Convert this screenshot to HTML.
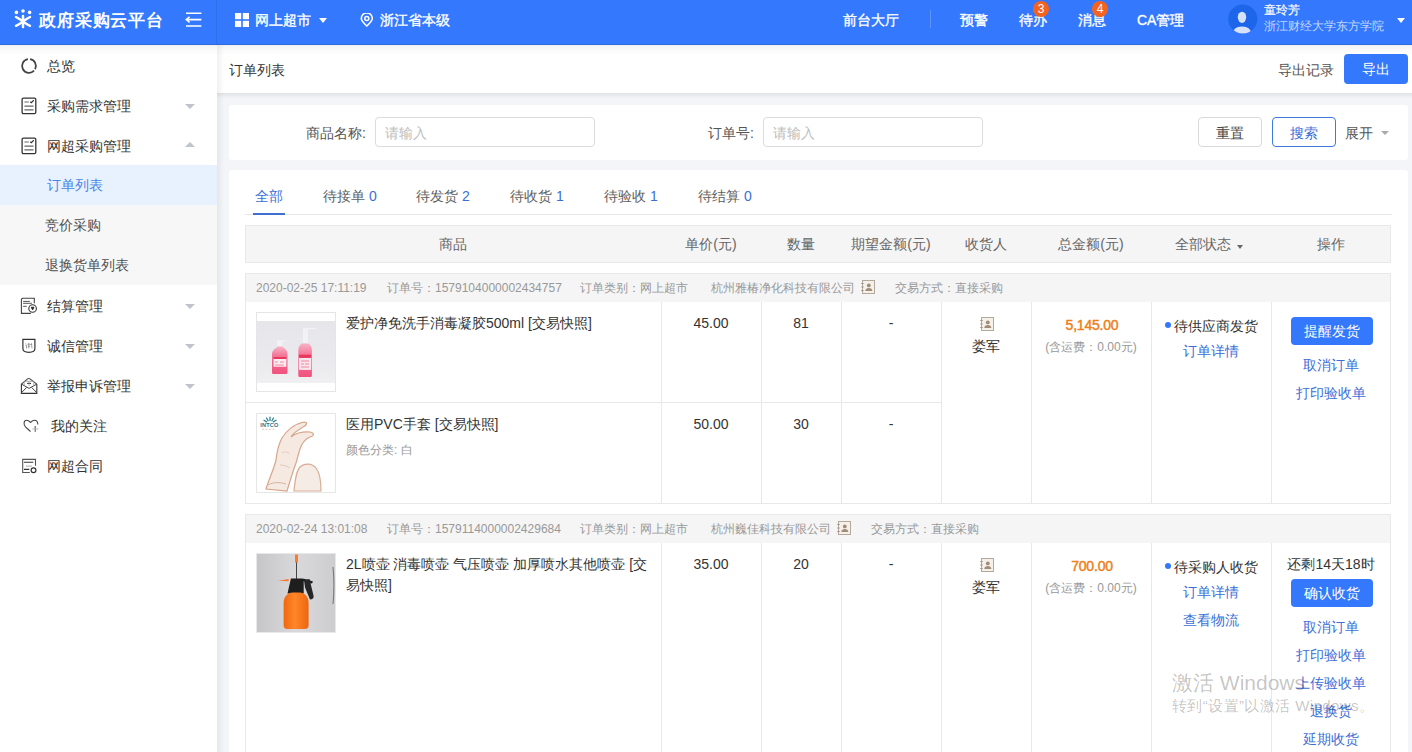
<!DOCTYPE html>
<html><head><meta charset="utf-8">
<style>
*{box-sizing:border-box;margin:0;padding:0}
html,body{width:1412px;height:752px;overflow:hidden;background:#f4f5f8;font-family:"Liberation Sans",sans-serif;font-size:14px;color:#333}
.a{position:absolute;white-space:nowrap}
#hd{position:absolute;left:0;top:0;width:1412px;height:45px;background:#3478fd;color:#fff}
#hd .t{position:absolute;top:0;line-height:40px;font-size:14px;color:#fff;-webkit-text-stroke:0.35px #fff}
#sb{position:absolute;left:0;top:45px;width:217px;height:707px;background:#fff}
#sbsh{position:absolute;left:217px;top:45px;width:7px;height:707px;background:linear-gradient(to right,rgba(0,0,0,.06),rgba(0,0,0,0))}
#hdsh{position:absolute;left:0;top:45px;width:1412px;height:11px;background:linear-gradient(to bottom,rgba(0,0,0,.055),rgba(0,0,0,.02) 45%,rgba(0,0,0,0))}
#hdln{position:absolute;left:0;top:44px;width:1412px;height:1px;background:rgba(0,0,0,.12)}
.mi{position:absolute;left:0;width:217px;height:40px;line-height:40px;font-size:14px;color:#333}
.mi .tx{position:absolute;left:47px;top:0}
.mi .car{position:absolute;left:185px;top:18px;width:0;height:0;border-left:5px solid transparent;border-right:5px solid transparent;border-top:5px solid #c0c4cc}
.mi .car.up{border-top:0;border-bottom:5px solid #c0c4cc;top:16px}
.sub{background:#f7f7f7;color:#505050}
.sub .tx{left:45px}
.sub.on{background:#e8f1fe;color:#4a85e6}
.sub.on .tx{left:47px}
#tb{position:absolute;left:217px;top:45px;width:1195px;height:48px;background:#fff}
#tbsh{position:absolute;left:217px;top:93px;width:1195px;height:6px;background:linear-gradient(to bottom,rgba(0,0,0,.08),rgba(0,0,0,.02) 60%,rgba(0,0,0,0))}
.btn{position:absolute;height:30px;line-height:30px;text-align:center;border:1px solid #d9d9d9;border-radius:4px;background:#fff;font-size:14px;color:#444}
.card{position:absolute;background:#fff;border-radius:3px}
.inp{position:absolute;height:30px;border:1px solid #dcdcdc;border-radius:4px;background:#fff;color:#bdbdbd;font-size:14px;line-height:30px;padding-left:9px}
.lbl{position:absolute;font-size:14px;color:#555;line-height:30px;text-align:right}
.c{position:absolute;width:200px;text-align:center;line-height:20px;white-space:nowrap}
.lk{color:#3b6fd8}
</style></head><body>
<div id="hd">
<svg class="a" style="left:12px;top:8px" width="22" height="22" viewBox="0 0 22 22"><g fill="#fff"><circle cx="4.4" cy="4.4" r="1.8"/><circle cx="11" cy="3" r="1.8"/><circle cx="17.6" cy="4.4" r="1.8"/></g><g stroke="#fff" stroke-width="2.5" stroke-linecap="round" fill="none"><path d="M11 8v11"/><path d="M4 9c3 1.5 5 3 7 4.3 2-1.3 4-2.8 7-4.3"/><path d="M4 17.8c3-1.5 5-3 7-4.3 2 1.3 4 2.8 7 4.3"/></g></svg>
<div class="a" style="left:39px;top:9px;font-size:16.5px;font-weight:bold;line-height:22px;letter-spacing:0.85px">政府采购云平台</div>
<svg class="a" style="left:184px;top:11px" width="19" height="17" viewBox="0 0 19 17"><g stroke="#fff" stroke-width="1.6" fill="none"><path d="M2 2.2h15.4M3 8.6h14.4M2 15h15.4"/><path d="M5.6 5.8L2.3 8.6l3.3 2.8"/></g></svg>
<div class="a" style="left:216px;top:0;width:1px;height:45px;background:rgba(0,0,0,.07)"></div>
<svg class="a" style="left:235px;top:13px" width="14" height="14" viewBox="0 0 14 14"><g fill="#fff"><rect x="0" y="0" width="6.2" height="6.2"/><rect x="7.8" y="0" width="6.2" height="6.2"/><rect x="0" y="7.8" width="6.2" height="6.2"/><rect x="7.8" y="7.8" width="6.2" height="6.2"/></g></svg>
<div class="t" style="left:255px">网上超市</div>
<div class="a" style="left:319px;top:18px;border-left:4.5px solid transparent;border-right:4.5px solid transparent;border-top:5px solid #fff"></div>
<svg class="a" style="left:360px;top:13px" width="14" height="14" viewBox="0 0 14 14"><path d="M6.8 13C3.5 9.8 1.3 7.4 1.3 5.4a5.5 5.5 0 0 1 11 0c0 2-2.2 4.4-5.5 7.6z" stroke="#fff" stroke-width="1.6" fill="none"/><circle cx="6.8" cy="5.5" r="2" stroke="#fff" stroke-width="1.5" fill="none"/></svg>
<div class="t" style="left:380px">浙江省本级</div>
<div class="t" style="left:843px">前台大厅</div>
<div class="a" style="left:930px;top:10px;width:1px;height:18px;background:rgba(255,255,255,.2)"></div>
<div class="t" style="left:960px">预警</div>
<div class="t" style="left:1019px">待办</div>
<div class="a" style="left:1033px;top:1px;width:16px;height:16px;border-radius:8px;background:#f4631e;color:#fff;font-size:12px;line-height:16px;text-align:center">3</div>
<div class="t" style="left:1078px">消息</div>
<div class="a" style="left:1092px;top:1px;width:16px;height:16px;border-radius:8px;background:#f4631e;color:#fff;font-size:12px;line-height:16px;text-align:center">4</div>
<div class="t" style="left:1137px">CA管理</div>
<svg class="a" style="left:1228px;top:4px" width="30" height="30" viewBox="0 0 30 30"><defs><clipPath id="cp"><circle cx="14.8" cy="15" r="14.6"/></clipPath></defs><circle cx="14.8" cy="15" r="14.6" fill="#1d66ea"/><g clip-path="url(#cp)" fill="#d6e2fa"><ellipse cx="14" cy="13.3" rx="4.2" ry="5.6"/><path d="M4.5 31c0-5 3-8.5 9.5-8.5s9.5 3.5 9.5 8.5z"/></g></svg>
<div class="a" style="left:1264px;top:2px;font-size:12px;line-height:16px;color:#fff;-webkit-text-stroke:.15px #fff">童玲芳</div>
<div class="a" style="left:1264px;top:18px;font-size:12px;line-height:16px;color:rgba(255,255,255,.72)">浙江财经大学东方学院</div>
<div class="a" style="left:1397px;top:18px;border-left:4.5px solid transparent;border-right:4.5px solid transparent;border-top:5px solid #fff"></div>
<div id="hdln"></div>
</div>
<div id="sb">
<div class="mi" style="top:1px"><svg class="a" style="left:20px;top:11px" width="18" height="18" viewBox="0 0 18 18"><g stroke="#444" stroke-width="1.8" fill="none"><path d="M7.92 2.18A6.9 6.9 0 1 0 14.05 13.71"/><path d="M15.09 12.24A6.9 6.9 0 0 0 10.08 2.18"/></g></svg><span class="tx">总览</span></div>
<div class="mi" style="top:41px"><svg class="a" style="left:21px;top:11px" width="16" height="18" viewBox="0 0 16 18"><rect x="1.1" y="1.1" width="13.7" height="15.5" rx="1.3" stroke="#333" stroke-width="1.3" fill="none"/><path d="M3.4 5H7.8M3.4 9.1h9.1M3.4 12.9h9.1" stroke="#666" stroke-width="1.2" fill="none"/><path d="M9.3 4.7l1 .9 2.5-2.3" stroke="#333" stroke-width="1.2" fill="none"/></svg><span class="tx">采购需求管理</span><i class="car"></i></div>
<div class="mi" style="top:81px"><svg class="a" style="left:21px;top:11px" width="16" height="18" viewBox="0 0 16 18"><rect x="1.1" y="1.1" width="13.7" height="15.5" rx="1.3" stroke="#333" stroke-width="1.3" fill="none"/><path d="M3.4 5H7.8M3.4 9.1h9.1M3.4 12.9h9.1" stroke="#666" stroke-width="1.2" fill="none"/><path d="M9.3 4.7l1 .9 2.5-2.3" stroke="#333" stroke-width="1.2" fill="none"/></svg><span class="tx">网超采购管理</span><i class="car up"></i></div>
<div class="mi sub on" style="top:120px"><span class="tx">订单列表</span></div>
<div class="mi sub" style="top:160px"><span class="tx">竞价采购</span></div>
<div class="mi sub" style="top:200px"><span class="tx">退换货单列表</span></div>
<div class="mi" style="top:241px"><svg class="a" style="left:16px;top:8px" width="26" height="26" viewBox="0 0 26 26"><path d="M18.3 9.3V4.3H6.4L5.4 5.3V19.4H14.9" stroke="#444" stroke-width="1.1" fill="none"/><path d="M7.1 7.4H13.8M7.1 9.3H15.9M7.1 12.3H10.7" stroke="#555" stroke-width="1"/><circle cx="16.6" cy="14.5" r="3.8" stroke="#333" stroke-width="1.1" fill="#fff"/><path d="M15.2 13.2l1.4 2.8 1.4-2.8z" fill="#222" stroke="#222" stroke-width=".8"/></svg><span class="tx">结算管理</span><i class="car"></i></div>
<div class="mi" style="top:281px"><svg class="a" style="left:16px;top:8px" width="26" height="26" viewBox="0 0 26 26"><path d="M6.9 5.4H18.9V14.5C18.9 16.9 16.9 18.3 12.9 18.3C8.9 18.3 6.9 16.9 6.9 14.5Z" stroke="#333" stroke-width="1.2" fill="none"/><path d="M9.5 9.3l.8.6M9.3 11.2h1.2v3.2M12.7 9v5.3M11.5 10.3h4.3M11.8 12.3h2.4M15.5 9.3l.5 5" stroke="#888" stroke-width=".8" fill="none"/></svg><span class="tx">诚信管理</span><i class="car"></i></div>
<div class="mi" style="top:321px"><svg class="a" style="left:16px;top:7px" width="26" height="26" viewBox="0 0 26 26"><path d="M5.4 11.1V20.4H20.8V11.1" stroke="#333" stroke-width="1.1" fill="none"/><path d="M5.4 11.1L11.6 5.9Q12.8 5 14 5.9L20.8 11.1" stroke="#444" stroke-width="1.1" fill="none"/><path d="M5.4 11.1L13.1 15.4L20.8 11.1M5.4 19.8L10.6 14.4M20.8 19.8L15.6 14.4" stroke="#444" stroke-width="1" fill="none"/><path d="M8.2 9.3V12.6M17.8 9.3V12.6M8.2 8.3H17.8" stroke="#999" stroke-width=".8"/><path d="M11.2 10.4H15" stroke="#222" stroke-width="1.1"/><path d="M13.1 8.3v4.6" stroke="#aaa" stroke-width=".8"/></svg><span class="tx">举报申诉管理</span><i class="car"></i></div>
<div class="mi" style="top:361px"><svg class="a" style="left:16px;top:7px" width="26" height="26" viewBox="0 0 26 26"><path d="M14.5 18.5L9.7 14.2C7.2 11.7 7.6 7.3 10.6 7.3C12.5 7.3 13.5 8.4 14.5 9.4C15.5 8.4 16.5 7.3 18.5 7.3C20.8 7.3 21.9 9.2 21.8 11.6" stroke="#444" stroke-width="1.1" fill="none"/><path d="M19.2 13.1V18.7" stroke="#555" stroke-width="1.1"/><path d="M16.3 15.9H22.5" stroke="#bbb" stroke-width="1"/></svg><span class="tx" style="left:51px">我的关注</span></div>
<div class="mi" style="top:401px"><svg class="a" style="left:16px;top:7px" width="26" height="26" viewBox="0 0 26 26"><path d="M19.5 12.8V6.4H6.7V19.5H13.8" stroke="#555" stroke-width="1.1" fill="none"/><path d="M8 9.3H17.3M8 16.4H13.3" stroke="#333" stroke-width="1.1"/><path d="M10 13.1H15.9" stroke="#aaa" stroke-width="1"/><circle cx="17.5" cy="17.3" r="2.4" stroke="#333" stroke-width="1.2" fill="none"/></svg><span class="tx">网超合同</span></div>
</div>
<div id="tb">
<div class="a" style="left:12px;top:15px;font-size:14px;line-height:20px;color:#333">订单列表</div>
<div class="a" style="left:1061px;top:15px;font-size:14px;line-height:20px;color:#555">导出记录</div>
<div class="a" style="left:1127px;top:9px;width:64px;height:30px;border-radius:4px;background:#3478fd;color:#fff;text-align:center;line-height:31px;font-size:14px">导出</div>
</div>
<div id="tbsh"></div>
<div id="hdsh"></div>
<div id="sbsh"></div>
<div class="card" style="left:229px;top:105px;width:1179px;height:55px">
<div class="lbl" style="left:0;top:13px;width:137px">商品名称:</div>
<div class="inp" style="left:146px;top:12px;width:220px">请输入</div>
<div class="lbl" style="left:400px;top:13px;width:125px">订单号:</div>
<div class="inp" style="left:534px;top:12px;width:220px">请输入</div>
<div class="btn" style="left:969px;top:12px;width:64px">重置</div>
<div class="btn" style="left:1043px;top:12px;width:64px;border-color:#3d7ad9;color:#3b6fd8">搜索</div>
<div class="a" style="left:1116px;top:13px;line-height:30px;color:#555">展开</div>
<div class="a" style="left:1152px;top:26px;border-left:4px solid transparent;border-right:4px solid transparent;border-top:4px solid #aaa"></div>
</div>
<div class="card" style="left:229px;top:170px;width:1179px;height:600px">
<div class="a" style="left:16px;top:44px;width:1147px;height:1px;background:#e8e8e8"></div>
<div class="a lk" style="left:26px;top:16px;line-height:20px">全部</div>
<div class="a" style="left:24px;top:43px;width:32px;height:2px;background:#3f6fcf"></div>
<div class="a" style="left:94px;top:16px;line-height:20px;color:#606060">待接单 <span class="lk">0</span></div>
<div class="a" style="left:187px;top:16px;line-height:20px;color:#606060">待发货 <span class="lk">2</span></div>
<div class="a" style="left:281px;top:16px;line-height:20px;color:#606060">待收货 <span class="lk">1</span></div>
<div class="a" style="left:375px;top:16px;line-height:20px;color:#606060">待验收 <span class="lk">1</span></div>
<div class="a" style="left:469px;top:16px;line-height:20px;color:#606060">待结算 <span class="lk">0</span></div>
</div>
<div class="a" style="left:245px;top:225px;width:1146px;height:38px;background:#f5f5f5;border:1px solid #e8e8e8"></div>
<div class="c " style="left:353px;top:234px;color:#666">商品</div>
<div class="c " style="left:611px;top:234px;color:#666">单价(元)</div>
<div class="c " style="left:701px;top:234px;color:#666">数量</div>
<div class="c " style="left:791px;top:234px;color:#666">期望金额(元)</div>
<div class="c " style="left:886px;top:234px;color:#666">收货人</div>
<div class="c " style="left:991px;top:234px;color:#666">总金额(元)</div>
<div class="c " style="left:1103px;top:234px;color:#666">全部状态</div>
<div class="a" style="left:1237px;top:245px;border-left:3.5px solid transparent;border-right:3.5px solid transparent;border-top:4px solid #666"></div>
<div class="c " style="left:1231px;top:234px;color:#666">操作</div>
<div class="a" style="left:245px;top:273px;width:1146px;height:29px;background:#f5f5f5;border:1px solid #e8e8e8;border-bottom:0"></div>
<div class="a" style="left:256px;top:279px;font-size:12px;color:#999;line-height:18px">2020-02-25 17:11:19</div>
<div class="a" style="left:387px;top:279px;font-size:12px;color:#999;line-height:18px">订单号：1579104000002434757</div>
<div class="a" style="left:580px;top:279px;font-size:12px;color:#999;line-height:18px">订单类别：网上超市</div>
<div class="a" style="left:711px;top:279px;font-size:12px;color:#999;line-height:18px">杭州雅椿净化科技有限公司</div>
<svg class="a" style="left:861px;top:280px" width="14" height="14" viewBox="0 0 14 14"><rect x="1.5" y="0.5" width="12" height="13" fill="#f5f0ea" stroke="#b3a89b" stroke-width="1"/><path d="M0.3 3.5h2.4M0.3 7h2.4M0.3 10.5h2.4" stroke="#a09080" stroke-width="1"/><circle cx="7.8" cy="5.4" r="1.9" fill="#a08d78"/><path d="M4.3 11c0-2 1.5-3 3.5-3s3.5 1 3.5 3z" fill="#a08d78"/></svg>
<div class="a" style="left:895px;top:279px;font-size:12px;color:#999;line-height:18px">交易方式：直接采购</div>
<div class="a" style="left:245px;top:302px;width:1146px;height:202px;border:1px solid #e8e8e8;border-top:0"></div>
<div class="a" style="left:661px;top:302px;width:1px;height:202px;background:#e8e8e8"></div>
<div class="a" style="left:761px;top:302px;width:1px;height:202px;background:#e8e8e8"></div>
<div class="a" style="left:841px;top:302px;width:1px;height:202px;background:#e8e8e8"></div>
<div class="a" style="left:941px;top:302px;width:1px;height:202px;background:#e8e8e8"></div>
<div class="a" style="left:1031px;top:302px;width:1px;height:202px;background:#e8e8e8"></div>
<div class="a" style="left:1151px;top:302px;width:1px;height:202px;background:#e8e8e8"></div>
<div class="a" style="left:1271px;top:302px;width:1px;height:202px;background:#e8e8e8"></div>
<div class="a" style="left:245px;top:402px;width:696px;height:1px;background:#e8e8e8"></div>
<svg class="a" style="left:256px;top:312px" width="80" height="80" viewBox="0 0 80 80">
<defs><linearGradient id="g1" x1="0" y1="0" x2="0" y2="1"><stop offset="0" stop-color="#e6e6ea"/><stop offset="0.8" stop-color="#ececef"/><stop offset="1" stop-color="#f0f0f2"/></linearGradient>
<linearGradient id="pk" x1="0" y1="0" x2="0" y2="1"><stop offset="0" stop-color="#f7b3c6"/><stop offset="0.35" stop-color="#f47396"/><stop offset="1" stop-color="#f0527e"/></linearGradient></defs>
<rect x="0.5" y="0.5" width="79" height="79" fill="#fff" stroke="#e6e6e6"/>
<rect x="1" y="9" width="78" height="62" fill="url(#g1)"/>
<path d="M21 28.5h9v1h-3.5v6h-5z" fill="#f3f3f5"/>
<path d="M16 42c0-3 2.5-5.5 5-6.5v-1h6v1c2.5 1 4.5 3.5 4.5 6.5v18.5c0 1-.8 1.5-1.8 1.5H17.8c-1 0-1.8-.5-1.8-1.5z" fill="url(#pk)"/>
<rect x="17.6" y="46.5" width="12.7" height="8.2" fill="#fbeef2"/>
<path d="M17.6 45h12.7v2H17.6z" fill="#e8385e"/>
<path d="M19 50h3M24 50h4M19 53h9" stroke="#ef6b8d" stroke-width=".8"/>
<path d="M47 16h13v1.2h-8v14h-5z" fill="#f2f2f4"/>
<path d="M42.3 38c0-3.5 2-6 3.5-6.5h6.5c1.5.5 3.6 3 3.6 6.5v25.5c0 1-.8 1.5-1.8 1.5h-10c-1 0-1.8-.5-1.8-1.5z" fill="url(#pk)"/>
<rect x="43" y="45.5" width="12.2" height="12.4" fill="#f9e6ec"/>
<rect x="43" y="42.7" width="12.2" height="3.2" fill="#e8385e"/>
<path d="M45 49h8M45 52h3M49 52h4M45 55h8" stroke="#ef7093" stroke-width=".8"/>
</svg>
<div class="a" style="left:346px;top:313px;line-height:20px;color:#333">爱护净免洗手消毒凝胶500ml [交易快照]</div>
<div class="c " style="left:611px;top:313px;">45.00</div>
<div class="c " style="left:701px;top:313px;">81</div>
<div class="c " style="left:791px;top:313px;">-</div>
<svg class="a" style="left:256px;top:413px" width="80" height="80" viewBox="0 0 80 80">
<defs><linearGradient id="sk" x1="0" y1="0" x2="1" y2="1"><stop offset="0" stop-color="#f6e4dc"/><stop offset="1" stop-color="#ecd0c2"/></linearGradient></defs>
<rect x="0.5" y="0.5" width="79" height="79" fill="#fff" stroke="#e6e6e6"/>
<path d="M8 7.3l2.6 1.6M10.5 5l1.6 2.8M14 4.2v3.3M17.5 5l-1.6 2.8M20 7.3l-2.6 1.6" stroke="#2f8294" stroke-width="1.3" stroke-linecap="round"/>
<text x="4.2" y="14.2" font-size="5.6" font-weight="bold" fill="#2a7688" font-family="Liberation Sans" letter-spacing=".2">INTCO</text><path d="M6 16.3h13" stroke="#e6d6cc" stroke-width="1.2" stroke-dasharray="2 1.5"/>
<path d="M10 76C13 66 18 56 20 47C21 38 22 32 26 25C30 18 38 11 48 9C52 9 51 12 47 14C42 17 37 20 35 24C38 21 46 18 54 19C59 20 58 23 54 24C49 26 46 30 44 36C42 42 41 47 40 50C37 58 34 68 31 78Z" fill="#f5e9e2" stroke="#d7a68c" stroke-width="1.2"/>
<path d="M26 40c3-2 6-1 8 1M24 52c4 0 7 1 10 3" stroke="#e6cabb" stroke-width="1" fill="none"/>
<path d="M38 78C39 68 40 58 44 54C48 50 56 50 60 55C64 60 65 70 65 78Z" fill="#f6ece6" stroke="#d9ad95" stroke-width="1.2"/>
<path d="M12 72c5-3 12-3 18-1" stroke="#d9b3a0" stroke-width="1" fill="none"/>
</svg>
<div class="a" style="left:346px;top:414px;line-height:20px;color:#333">医用PVC手套 [交易快照]</div>
<div class="a" style="left:346px;top:441px;line-height:18px;font-size:12px;color:#999">颜色分类: 白</div>
<div class="c " style="left:611px;top:414px;">50.00</div>
<div class="c " style="left:701px;top:414px;">30</div>
<div class="c " style="left:791px;top:414px;">-</div>
<svg class="a" style="left:980px;top:317px" width="14" height="14" viewBox="0 0 14 14"><rect x="1.5" y="0.5" width="12" height="13" fill="#f5f0ea" stroke="#b3a89b" stroke-width="1"/><path d="M0.3 3.5h2.4M0.3 7h2.4M0.3 10.5h2.4" stroke="#a09080" stroke-width="1"/><circle cx="7.8" cy="5.4" r="1.9" fill="#a08d78"/><path d="M4.3 11c0-2 1.5-3 3.5-3s3.5 1 3.5 3z" fill="#a08d78"/></svg>
<div class="c " style="left:886px;top:336px;">娄军</div>
<div class="c " style="left:992px;top:315px;color:#ee7f1c;-webkit-text-stroke:.45px #ee7f1c;letter-spacing:-.2px">5,145.00</div>
<div class="c " style="left:991px;top:337px;font-size:12px;color:#999">(含运费：0.00元)</div>
<div class="c " style="left:1111px;top:316px;"><span style="display:inline-block;width:6px;height:6px;border-radius:3px;background:#3478fa;margin-right:3px;position:relative;top:-3px"></span>待供应商发货</div>
<div class="c lk" style="left:1111px;top:341px;">订单详情</div>
<div class="a" style="left:1291px;top:317px;width:82px;height:28px;border-radius:4px;background:#3478fd;color:#fff;text-align:center;line-height:28px">提醒发货</div>
<div class="c lk" style="left:1231px;top:355px;">取消订单</div>
<div class="c lk" style="left:1231px;top:383px;">打印验收单</div>
<div class="a" style="left:245px;top:514px;width:1146px;height:29px;background:#f5f5f5;border:1px solid #e8e8e8;border-bottom:0"></div>
<div class="a" style="left:256px;top:520px;font-size:12px;color:#999;line-height:18px">2020-02-24 13:01:08</div>
<div class="a" style="left:387px;top:520px;font-size:12px;color:#999;line-height:18px">订单号：1579114000002429684</div>
<div class="a" style="left:580px;top:520px;font-size:12px;color:#999;line-height:18px">订单类别：网上超市</div>
<div class="a" style="left:711px;top:520px;font-size:12px;color:#999;line-height:18px">杭州巍佳科技有限公司</div>
<svg class="a" style="left:837px;top:521px" width="14" height="14" viewBox="0 0 14 14"><rect x="1.5" y="0.5" width="12" height="13" fill="#f5f0ea" stroke="#b3a89b" stroke-width="1"/><path d="M0.3 3.5h2.4M0.3 7h2.4M0.3 10.5h2.4" stroke="#a09080" stroke-width="1"/><circle cx="7.8" cy="5.4" r="1.9" fill="#a08d78"/><path d="M4.3 11c0-2 1.5-3 3.5-3s3.5 1 3.5 3z" fill="#a08d78"/></svg>
<div class="a" style="left:871px;top:520px;font-size:12px;color:#999;line-height:18px">交易方式：直接采购</div>
<div class="a" style="left:245px;top:543px;width:1146px;height:260px;border:1px solid #e8e8e8;border-top:0"></div>
<div class="a" style="left:661px;top:543px;width:1px;height:260px;background:#e8e8e8"></div>
<div class="a" style="left:761px;top:543px;width:1px;height:260px;background:#e8e8e8"></div>
<div class="a" style="left:841px;top:543px;width:1px;height:260px;background:#e8e8e8"></div>
<div class="a" style="left:941px;top:543px;width:1px;height:260px;background:#e8e8e8"></div>
<div class="a" style="left:1031px;top:543px;width:1px;height:260px;background:#e8e8e8"></div>
<div class="a" style="left:1151px;top:543px;width:1px;height:260px;background:#e8e8e8"></div>
<div class="a" style="left:1271px;top:543px;width:1px;height:260px;background:#e8e8e8"></div>
<svg class="a" style="left:256px;top:553px" width="80" height="80" viewBox="0 0 80 80">
<defs><linearGradient id="gb" x1="0" y1="0" x2="1" y2="0"><stop offset="0" stop-color="#c6c6c8"/><stop offset="0.5" stop-color="#d9d9db"/><stop offset="1" stop-color="#cdcdcf"/></linearGradient>
<linearGradient id="or" x1="0" y1="0" x2="1" y2="0"><stop offset="0" stop-color="#f06810"/><stop offset="0.45" stop-color="#ff8628"/><stop offset="1" stop-color="#ec6610"/></linearGradient></defs>
<rect x="0.5" y="0.5" width="79" height="79" fill="url(#gb)" stroke="#e8e8e8"/>
<path d="M40.5 9v17" stroke="#444" stroke-width="1"/>
<path d="M39 1.5h3v8h-3z" fill="#ff7a2a"/>
<path d="M22 27.7l10.6-1.6v2.2z" fill="#ff7a30"/>
<path d="M34.9 25.5H46l3 .5 5 1.5 3 1-1 2-3-.5-2-.8-3.3-1V40.6H31.5z" fill="#1e1e1e"/>
<path d="M48 27l5.5-1 4 16.5c.5 2-.5 3.5-2 3.7l-1.5.2-5-12z" fill="#262626"/>
<path d="M27.6 50c0-6 4-10.5 9-10.5h7c5 0 9 4.5 9 10.5v22.5c0 2-1.5 3.5-3.5 3.5H31c-2 0-3.4-1.5-3.4-3.5z" fill="url(#or)"/>
<path d="M77 14c1.2 12 1.2 25 0 37" stroke="#666" stroke-width="0.9" fill="none"/>
</svg>
<div class="a" style="left:346px;top:554px;width:312px;white-space:normal;line-height:21px;color:#333">2L喷壶 消毒喷壶 气压喷壶 加厚喷水其他喷壶 [交易快照]</div>
<div class="c " style="left:611px;top:554px;">35.00</div>
<div class="c " style="left:701px;top:554px;">20</div>
<div class="c " style="left:791px;top:554px;">-</div>
<svg class="a" style="left:980px;top:558px" width="14" height="14" viewBox="0 0 14 14"><rect x="1.5" y="0.5" width="12" height="13" fill="#f5f0ea" stroke="#b3a89b" stroke-width="1"/><path d="M0.3 3.5h2.4M0.3 7h2.4M0.3 10.5h2.4" stroke="#a09080" stroke-width="1"/><circle cx="7.8" cy="5.4" r="1.9" fill="#a08d78"/><path d="M4.3 11c0-2 1.5-3 3.5-3s3.5 1 3.5 3z" fill="#a08d78"/></svg>
<div class="c " style="left:886px;top:577px;">娄军</div>
<div class="c " style="left:992px;top:556px;color:#ee7f1c;-webkit-text-stroke:.45px #ee7f1c;letter-spacing:-.2px">700.00</div>
<div class="c " style="left:991px;top:578px;font-size:12px;color:#999">(含运费：0.00元)</div>
<div class="c " style="left:1111px;top:557px;"><span style="display:inline-block;width:6px;height:6px;border-radius:3px;background:#3478fa;margin-right:3px;position:relative;top:-3px"></span>待采购人收货</div>
<div class="c lk" style="left:1111px;top:582px;">订单详情</div>
<div class="c lk" style="left:1111px;top:610px;">查看物流</div>
<div class="c " style="left:1231px;top:554px;color:#333">还剩14天18时</div>
<div class="a" style="left:1291px;top:579px;width:82px;height:28px;border-radius:4px;background:#3478fd;color:#fff;text-align:center;line-height:28px">确认收货</div>
<div class="c lk" style="left:1231px;top:617px;">取消订单</div>
<div class="c lk" style="left:1231px;top:645px;">打印验收单</div>
<div class="c lk" style="left:1231px;top:673px;">上传验收单</div>
<div class="c lk" style="left:1231px;top:701px;">退换货</div>
<div class="c lk" style="left:1231px;top:729px;">延期收货</div>
<div class="a" style="left:1172px;top:670px;font-size:21px;line-height:26px;color:rgba(0,0,0,.24)">激活 Windows</div>
<div class="a" style="left:1172px;top:697px;font-size:15px;line-height:18px;letter-spacing:.4px;color:rgba(0,0,0,.24)">转到“设置”以激活 Windows。</div>
</body></html>
